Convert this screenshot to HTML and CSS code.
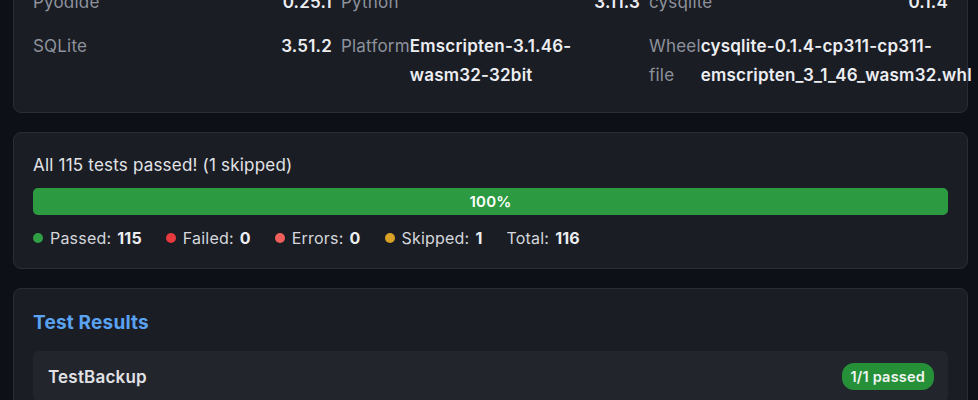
FILE: index.html
```html
<!DOCTYPE html>
<html lang="en">
<head>
<meta charset="utf-8">
<title>cysqlite Pyodide tests</title>
<link rel="stylesheet" href="styles.css">
</head>
<body>
<main class="page">
  <section class="card env-card">
    <div class="env-grid">
      <div class="env-item"><span class="env-label">Pyodide</span><span class="env-value">0.25.1</span></div>
      <div class="env-item"><span class="env-label">Python</span><span class="env-value">3.11.3</span></div>
      <div class="env-item"><span class="env-label">cysqlite</span><span class="env-value">0.1.4</span></div>
      <div class="env-item"><span class="env-label">SQLite</span><span class="env-value">3.51.2</span></div>
      <div class="env-item"><span class="env-label">Platform</span><span class="env-value">Emscripten-3.1.46-wasm32-32bit</span></div>
      <div class="env-item"><span class="env-label">Wheel file</span><span class="env-value">cysqlite-0.1.4-cp311-cp311-emscripten_3_1_46_wasm32.whl</span></div>
    </div>
  </section>

  <section class="card summary-card">
    <div class="summary-title">All 115 tests passed! (1 skipped)</div>
    <div class="progress">
      <div class="progress-fill" style="width: 100%">100%</div>
    </div>
    <div class="legend">
      <span class="legend-item"><span class="dot dot-pass"></span>Passed: <b>115</b></span>
      <span class="legend-item"><span class="dot dot-fail"></span>Failed: <b>0</b></span>
      <span class="legend-item"><span class="dot dot-error"></span>Errors: <b>0</b></span>
      <span class="legend-item"><span class="dot dot-skip"></span>Skipped: <b>1</b></span>
      <span class="legend-item">Total: <b>116</b></span>
    </div>
  </section>

  <section class="card results-card">
    <h2 class="results-title">Test Results</h2>
    <div class="suite-row">
      <span class="suite-name">TestBackup</span>
      <span class="badge">1/1 passed</span>
    </div>
  </section>
</main>
</body>
</html>
```

FILE: styles.css
```css
html, body {
  margin: 0;
  padding: 0;
  background: #0e1017;
  height: 400px;
  overflow: hidden;
}

body {
  font-family: Inter, "Noto Sans", "Liberation Sans", sans-serif;
  color: #e6e8ec;
  font-size: 17px;
  letter-spacing: 0.2px;
}

.page {
  display: flex;
  flex-direction: column;
  gap: 19px;
  padding: 0 10px 0 13px;
  margin-top: -32px;
}

.card {
  background: #1b1d24;
  border: 1px solid #2a2d35;
  border-radius: 8px;
  padding: 19px;
}

/* environment card */
.env-card {
  padding-bottom: 22px;
}

.env-grid {
  display: grid;
  grid-template-columns: repeat(3, 1fr);
  column-gap: 9px;
  row-gap: 15px;
  line-height: 29px;
}

.env-item {
  display: flex;
  justify-content: space-between;
  min-width: 0;
}

.env-label {
  color: #8d929c;
}

.env-value {
  font-weight: 600;
  color: #eceef2;
}

/* summary card */
.summary-title {
  line-height: 26px;
  color: #e2e4e8;
}

.progress {
  margin-top: 10px;
  height: 27px;
  background: #2a2d35;
  border-radius: 5px;
  overflow: hidden;
}

.progress-fill {
  height: 100%;
  background: #2b9a41;
  color: #ffffff;
  font-size: 15px;
  font-weight: 600;
  display: flex;
  align-items: center;
  justify-content: center;
}

.legend {
  margin-top: 12px;
  display: flex;
  gap: 24px;
  font-size: 16px;
  line-height: 22px;
  color: #d4d7dc;
}

.legend-item {
  display: flex;
  align-items: center;
  gap: 6px;
}

.legend-item b {
  font-weight: 700;
  color: #eceef2;
}

.dot {
  width: 10px;
  height: 10px;
  border-radius: 50%;
  margin-right: 1px;
}

.dot-pass { background: #2ea043; }
.dot-fail { background: #e8393f; }
.dot-error { background: #f0605a; }
.dot-skip { background: #d9a125; }

/* results card */
.results-title {
  margin: 0;
  font-size: 19px;
  font-weight: 700;
  line-height: 30px;
  color: #5aa2f2;
}

.suite-row {
  margin-top: 13px;
  background: #23252c;
  border-radius: 6px;
  padding: 12px 14px 12px 15px;
  display: flex;
  align-items: center;
  justify-content: space-between;
}

.suite-name {
  font-weight: 600;
  font-size: 17px;
  color: #e0e2e6;
}

.badge {
  background: #269039;
  color: #f2f5f3;
  font-size: 14.5px;
  font-weight: 600;
  line-height: 27px;
  padding: 0 9px;
  border-radius: 12px;
}
```
